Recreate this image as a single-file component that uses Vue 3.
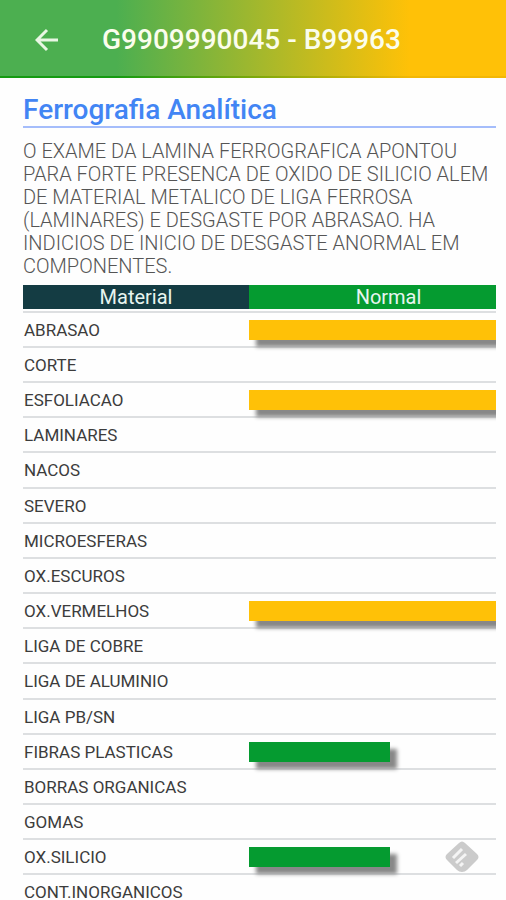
<script setup>
const rows = [
  { name: 'ABRASAO', value: 100, level: 'alert' },
  { name: 'CORTE' },
  { name: 'ESFOLIACAO', value: 100, level: 'alert' },
  { name: 'LAMINARES' },
  { name: 'NACOS' },
  { name: 'SEVERO' },
  { name: 'MICROESFERAS' },
  { name: 'OX.ESCUROS' },
  { name: 'OX.VERMELHOS', value: 100, level: 'alert' },
  { name: 'LIGA DE COBRE' },
  { name: 'LIGA DE ALUMINIO' },
  { name: 'LIGA PB/SN' },
  { name: 'FIBRAS PLASTICAS', value: 57, level: 'normal' },
  { name: 'BORRAS ORGANICAS' },
  { name: 'GOMAS' },
  { name: 'OX.SILICIO', value: 57, level: 'normal' },
  { name: 'CONT.INORGANICOS' },
]
</script>

<template>
  <div class="screen">
    <header class="topbar">
      <button class="back" type="button" aria-label="Voltar">
        <svg viewBox="0 0 24 24" width="24" height="24" aria-hidden="true">
          <path d="M23 12H2M12 2L2 12l10 10" fill="none" stroke="currentColor" stroke-width="3" />
        </svg>
      </button>
      <h1 class="title">G9909990045 - B99963</h1>
    </header>

    <main class="content">
      <h2 class="section">Ferrografia Analítica</h2>
      <p class="summary">
        O EXAME DA LAMINA FERROGRAFICA APONTOU PARA FORTE PRESENCA DE OXIDO DE SILICIO ALEM DE
        MATERIAL METALICO DE LIGA FERROSA (LAMINARES) E DESGASTE POR ABRASAO. HA INDICIOS DE
        INICIO DE DESGASTE ANORMAL EM COMPONENTES.
      </p>

      <table class="materials">
        <thead>
          <tr>
            <th class="head-material" scope="col">Material</th>
            <th class="head-normal" scope="col">Normal</th>
          </tr>
        </thead>
        <tbody>
          <tr class="spacer" aria-hidden="true"><td colspan="2"></td></tr>
          <tr v-for="row in rows" :key="row.name">
            <td class="name">{{ row.name }}</td>
            <td class="track">
              <div v-if="row.value" class="bar" :class="row.level" :style="{ width: row.value + '%' }"></div>
            </td>
          </tr>
        </tbody>
      </table>
    </main>

    <button class="feedback" type="button" aria-label="Feedback">
      <svg viewBox="0 0 36 32" width="36" height="32" aria-hidden="true">
        <path d="M15 2Q18-1 21 2L33 13Q36 16 33 19L23 29Q21 31 18 31Q15 31 13 29L3 19Q0 16 3 13Z" fill="#cbcbcb" />
        <path d="M9 17L18 8M12 22L22 13M16 25L19 22" fill="none" stroke="#f4f4f4" stroke-width="3" />
      </svg>
    </button>
  </div>
</template>

<style>
body {
  margin: 0;
  background: #fefefe;
}
</style>

<style scoped>
.screen {
  position: relative;
  display: flex;
  flex-direction: column;
  height: 100vh;
  overflow: hidden;
  font-family: Roboto, "Liberation Sans", sans-serif;
}

.topbar {
  display: flex;
  flex: none;
  align-items: center;
  gap: 40px;
  height: 78px;
  padding: 0 32px;
  box-sizing: border-box;
  border-bottom: 2px solid transparent;
  background:
    linear-gradient(90deg, #4caf50 23%, #ffc107 81%) padding-box,
    linear-gradient(90deg, #159b12 23%, #f2b705 81%) border-box;
}

.back {
  display: flex;
  padding: 4px 3px 0;
  border: 0;
  background: none;
  color: #e9f7e4;
}

.title {
  margin: 0;
  padding-top: 4px;
  color: #fbfdec;
  font-size: 28px;
  font-weight: 500;
  line-height: 32px;
  white-space: nowrap;
}

.content {
  flex: 1;
  min-height: 0;
  padding: 16px 10px 0 23px;
  overflow-y: auto;
  scrollbar-width: none;
}

.section {
  margin: 0;
  border-bottom: 2px solid #a5bdfb;
  color: #4285f4;
  font-size: 28px;
  font-weight: 500;
  line-height: 32px;
}

.summary {
  margin: 12px 0 7px;
  color: #555;
  font-size: 20px;
  font-weight: 300;
  line-height: 23px;
}

.materials {
  width: 100%;
  border-collapse: separate;
  border-spacing: 0;
  table-layout: fixed;
}

th {
  height: 24px;
  padding: 0;
  color: #e8f5f0;
  font-size: 20px;
  font-weight: 400;
  line-height: 24px;
}

.head-material {
  width: 226px;
  background: #143c43;
}

.head-normal {
  padding-left: 32px;
  background: #059b30;
}

td {
  height: 33px;
  padding: 0;
  border-bottom: 2px solid #dddfe1;
}

tr:nth-child(6n) td {
  height: 34px;
}

.spacer td {
  height: 2px;
}

.name {
  padding-left: 1px;
  color: #3c3c3c;
  font-size: 17px;
  line-height: 16px;
}

.track {
  overflow-x: clip;
  overflow-y: visible;
}

.bar {
  height: 20px;
  box-shadow: 7px 7px 4px #888;
}

.alert {
  background: #ffc107;
}

.normal {
  background: #059b30;
}

.feedback {
  position: absolute;
  right: 26px;
  bottom: 27px;
  display: flex;
  padding: 0;
  border: 0;
  background: none;
}
</style>
